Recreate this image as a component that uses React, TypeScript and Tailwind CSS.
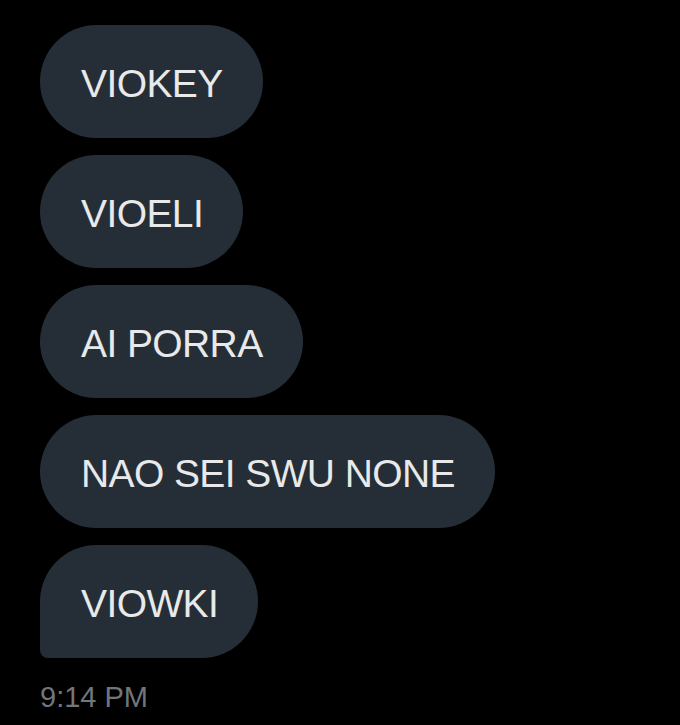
import React from 'react';

const messages = ['VIOKEY', 'VIOELI', 'AI PORRA', 'NAO SEI SWU NONE', 'VIOWKI'];

export default function App() {
  return (
    <div
      className="w-[680px] h-[725px] bg-black pt-[25px] pl-[40px] overflow-hidden"
      style={{ fontFamily: '"Liberation Sans", Arial, sans-serif' }}
    >
      <div className="flex flex-col items-start gap-[17px]">
        {messages.map((m, i) => (
          <div
            key={i}
            className={`h-[113px] flex items-center pl-[41px] pr-[40px] pt-[3px] bg-[#252e36] text-[#e7e9ea] text-[39px] tracking-[-0.6px] leading-none rounded-[57px] ${
              i === messages.length - 1 ? 'rounded-bl-[8px]' : ''
            }`}
          >
            {m}
          </div>
        ))}
      </div>
      <div className="mt-[25px] text-[29px] leading-none text-[#71767b]">9:14 PM</div>
    </div>
  );
}
